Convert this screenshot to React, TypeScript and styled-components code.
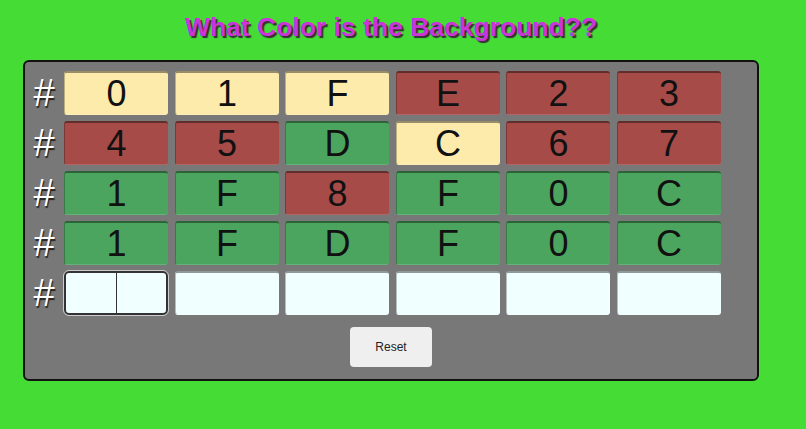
import { createGlobalStyle, styled } from "styled-components";

type Tone = "yellow" | "red" | "green";

const rows: { ch: string; tone: Tone }[][] = [
  [
    { ch: "0", tone: "yellow" },
    { ch: "1", tone: "yellow" },
    { ch: "F", tone: "yellow" },
    { ch: "E", tone: "red" },
    { ch: "2", tone: "red" },
    { ch: "3", tone: "red" },
  ],
  [
    { ch: "4", tone: "red" },
    { ch: "5", tone: "red" },
    { ch: "D", tone: "green" },
    { ch: "C", tone: "yellow" },
    { ch: "6", tone: "red" },
    { ch: "7", tone: "red" },
  ],
  [
    { ch: "1", tone: "green" },
    { ch: "F", tone: "green" },
    { ch: "8", tone: "red" },
    { ch: "F", tone: "green" },
    { ch: "0", tone: "green" },
    { ch: "C", tone: "green" },
  ],
  [
    { ch: "1", tone: "green" },
    { ch: "F", tone: "green" },
    { ch: "D", tone: "green" },
    { ch: "F", tone: "green" },
    { ch: "0", tone: "green" },
    { ch: "C", tone: "green" },
  ],
];

const toneColors: Record<Tone, string> = {
  yellow: "#fdebab",
  red: "#a64b48",
  green: "#4ba55f",
};

function App() {
  return (
    <>
      <GlobalStyle />
      <Title>What Color is the Background??</Title>
      <Board>
        <Grid>
          {rows.map((row, i) => (
            <Row key={i}>
              <Hash>#</Hash>
              {row.map((cell, j) => (
                <Cell key={j} $bg={toneColors[cell.tone]}>
                  {cell.ch}
                </Cell>
              ))}
            </Row>
          ))}
          <Row>
            <Hash>#</Hash>
            {[0, 1, 2, 3, 4, 5].map((j) => (
              <Cell key={j} $bg="#f0ffff" $focused={j === 0}>
                {j === 0 && <Caret />}
              </Cell>
            ))}
          </Row>
        </Grid>
        <ResetButton>Reset</ResetButton>
      </Board>
    </>
  );
}

export default App;

const GlobalStyle = createGlobalStyle`
  html, body {
    margin: 0;
    padding: 0;
    background: #45dd35;
    font-family: "Liberation Sans", Arial, sans-serif;
  }
`;

const Title = styled.h1`
  margin: 0;
  width: 782px;
  padding-top: 12px;
  height: 48px;
  text-align: center;
  font-size: 26.5px;
  font-weight: bold;
  color: #cc33dd;
  text-shadow: 2px 2px 1px #3a2a3a;
  box-sizing: border-box;
  line-height: 30px;
`;

const Board = styled.div`
  margin: 12px 0 0 23px;
  width: 736px;
  height: 321px;
  box-sizing: border-box;
  background: #787878;
  border: 2px solid #111;
  border-radius: 6px;
  padding: 9px 0 12px 0;
  display: flex;
  flex-direction: column;
  align-items: center;
`;

const Grid = styled.div`
  align-self: flex-start;
  display: flex;
  flex-direction: column;
  gap: 6px;
`;

const Row = styled.div`
  display: flex;
  align-items: center;
  gap: 6px;
  height: 44px;
`;

const Hash = styled.div`
  width: 28px;
  padding-left: 5px;
  text-align: center;
  color: #fff;
  font-size: 38px;
  line-height: 44px;
  text-shadow: 1px 2px 1px #222;
`;

const Cell = styled.div<{ $bg: string; $focused?: boolean }>`
  position: relative;
  width: 104px;
  height: 44px;
  box-sizing: border-box;
  background: ${(p) => p.$bg};
  border-radius: 3px;
  border-top: 2px solid rgba(0, 0, 0, 0.4);
  border-left: 1px solid rgba(0, 0, 0, 0.25);
  border-bottom: 1px solid rgba(255, 255, 255, 0.15);
  ${(p) =>
    p.$focused &&
    `
    border: 2px solid #333;
    border-radius: 5px;
    outline: 1px solid #ccc;
  `}
  display: flex;
  align-items: center;
  justify-content: center;
  color: #111;
  font-size: 36px;
  line-height: 1;
  margin-right: 0.5px;
`;

const Caret = styled.span`
  position: absolute;
  left: 50%;
  top: 0;
  bottom: 0;
  width: 1px;
  background: #333;
`;

const ResetButton = styled.button`
  margin-top: 12px;
  width: 82px;
  height: 40px;
  border: none;
  border-radius: 4px;
  background: #efefef;
  color: #222;
  font-family: "Liberation Sans", Arial, sans-serif;
  font-size: 12px;
`;
